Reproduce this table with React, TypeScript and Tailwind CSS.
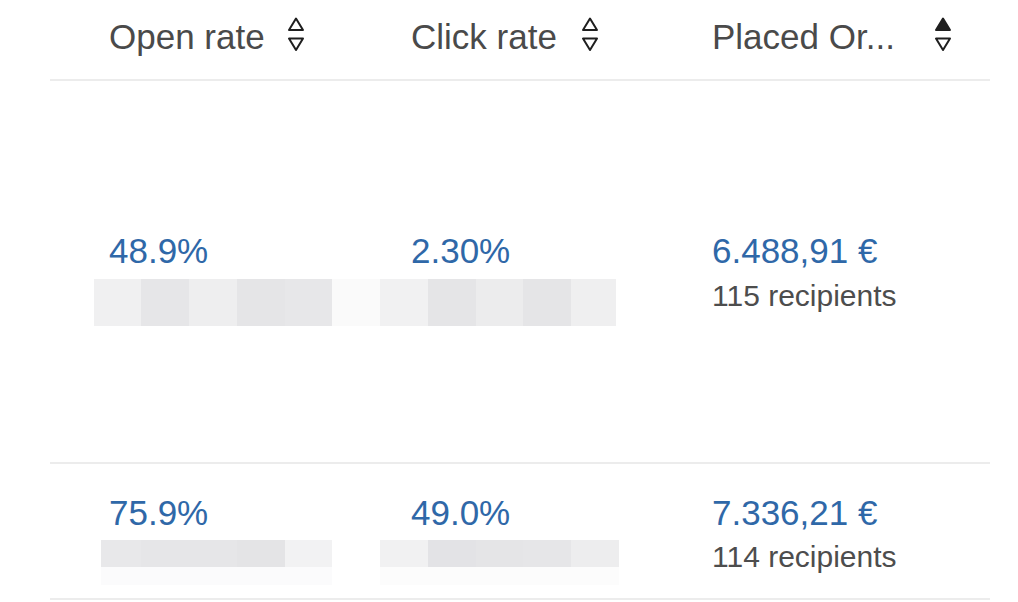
import React from "react";

const SortIcon = ({ active = false }: { active?: boolean }) => (
  <svg width="18" height="36" viewBox="0 0 18 36" className="shrink-0">
    <path
      d="M9 1.5 L16 13 L2 13 Z"
      fill={active ? "#1f1f1f" : "none"}
      stroke="#1f1f1f"
      strokeWidth="2"
      strokeLinejoin="round"
    />
    <path
      d="M2 21.5 L16 21.5 L9 33 Z"
      fill="none"
      stroke="#1f1f1f"
      strokeWidth="2"
      strokeLinejoin="round"
    />
  </svg>
);

type Cell = { w: number; c: string };

const Mosaic = ({ cells, h, className }: { cells: Cell[]; h: number; className?: string }) => (
  <div className={`flex ${className ?? ""}`} style={{ height: h }}>
    {cells.map((cell, i) => (
      <div key={i} style={{ width: cell.w, backgroundColor: cell.c }} className="shrink-0" />
    ))}
  </div>
);

export default function App() {
  return (
    <div
      className="w-[1018px] h-[602px] bg-white overflow-hidden pl-[50px] pr-[28px]"
      style={{ fontFamily: '"Liberation Sans", Arial, sans-serif' }}
    >
      {/* header */}
      <div className="h-[81px] border-b-2 border-[#ececec] flex pl-[59px] pt-[20px] text-[35px] leading-[34px] text-[#4a4a4a]">
        <div className="w-[302px] flex items-start">
          <span>Open rate</span>
          <span className="ml-[22px] -mt-[3px]"><SortIcon /></span>
        </div>
        <div className="w-[301px] flex items-start">
          <span>Click rate</span>
          <span className="ml-[24px] -mt-[3px]"><SortIcon /></span>
        </div>
        <div className="flex-1 flex items-start">
          <span>Placed Or...</span>
          <span className="ml-[39px] -mt-[3px]"><SortIcon active /></span>
        </div>
      </div>

      {/* row 1 */}
      <div className="h-[383px] border-b-2 border-[#ececec] flex pl-[59px] pt-[153px]">
        <div className="w-[302px] flex flex-col">
          <span className="text-[35px] leading-[34px] text-[#2f68a8]">48.9%</span>
          <Mosaic
            className="-ml-[15px] mt-[11px]"
            h={47}
            cells={[
              { w: 47, c: "#f0f0f1" },
              { w: 48, c: "#e6e6e8" },
              { w: 48, c: "#eeeeef" },
              { w: 48, c: "#e5e5e7" },
              { w: 47, c: "#e7e7e9" },
              { w: 48, c: "#fafafa" },
            ]}
          />
        </div>
        <div className="w-[301px] flex flex-col">
          <span className="text-[35px] leading-[34px] text-[#2f68a8]">2.30%</span>
          <Mosaic
            className="-ml-[31px] mt-[11px]"
            h={47}
            cells={[
              { w: 48, c: "#f1f1f2" },
              { w: 48, c: "#e5e5e7" },
              { w: 47, c: "#ececed" },
              { w: 48, c: "#e5e5e7" },
              { w: 45, c: "#efeff0" },
            ]}
          />
        </div>
        <div className="flex-1 flex flex-col">
          <span className="text-[35px] leading-[34px] text-[#2f68a8]">6.488,91 €</span>
          <span className="text-[30px] leading-[30px] text-[#4d4d4d] mt-[13px]">115 recipients</span>
        </div>
      </div>

      {/* row 2 */}
      <div className="h-[136px] border-b-2 border-[#ececec] flex pl-[59px] pt-[32px]">
        <div className="w-[302px] flex flex-col">
          <span className="text-[35px] leading-[34px] text-[#2f68a8]">75.9%</span>
          <Mosaic
            className="-ml-[8px] mt-[10px]"
            h={27}
            cells={[
              { w: 40, c: "#e8e8ea" },
              { w: 48, c: "#e6e6e8" },
              { w: 48, c: "#e6e6e8" },
              { w: 48, c: "#e4e4e6" },
              { w: 47, c: "#f2f2f3" },
            ]}
          />
          <Mosaic className="-ml-[8px]" h={18} cells={[{ w: 231, c: "#fbfbfc" }]} />
        </div>
        <div className="w-[301px] flex flex-col">
          <span className="text-[35px] leading-[34px] text-[#2f68a8]">49.0%</span>
          <Mosaic
            className="-ml-[31px] mt-[10px]"
            h={27}
            cells={[
              { w: 48, c: "#f1f1f2" },
              { w: 48, c: "#e3e3e6" },
              { w: 47, c: "#e5e5e7" },
              { w: 48, c: "#e6e6e8" },
              { w: 48, c: "#ededee" },
            ]}
          />
          <Mosaic className="-ml-[31px]" h={18} cells={[{ w: 239, c: "#fcfcfc" }]} />
        </div>
        <div className="flex-1 flex flex-col">
          <span className="text-[35px] leading-[34px] text-[#2f68a8]">7.336,21 €</span>
          <span className="text-[30px] leading-[30px] text-[#4d4d4d] mt-[12px]">114 recipients</span>
        </div>
      </div>
    </div>
  );
}
